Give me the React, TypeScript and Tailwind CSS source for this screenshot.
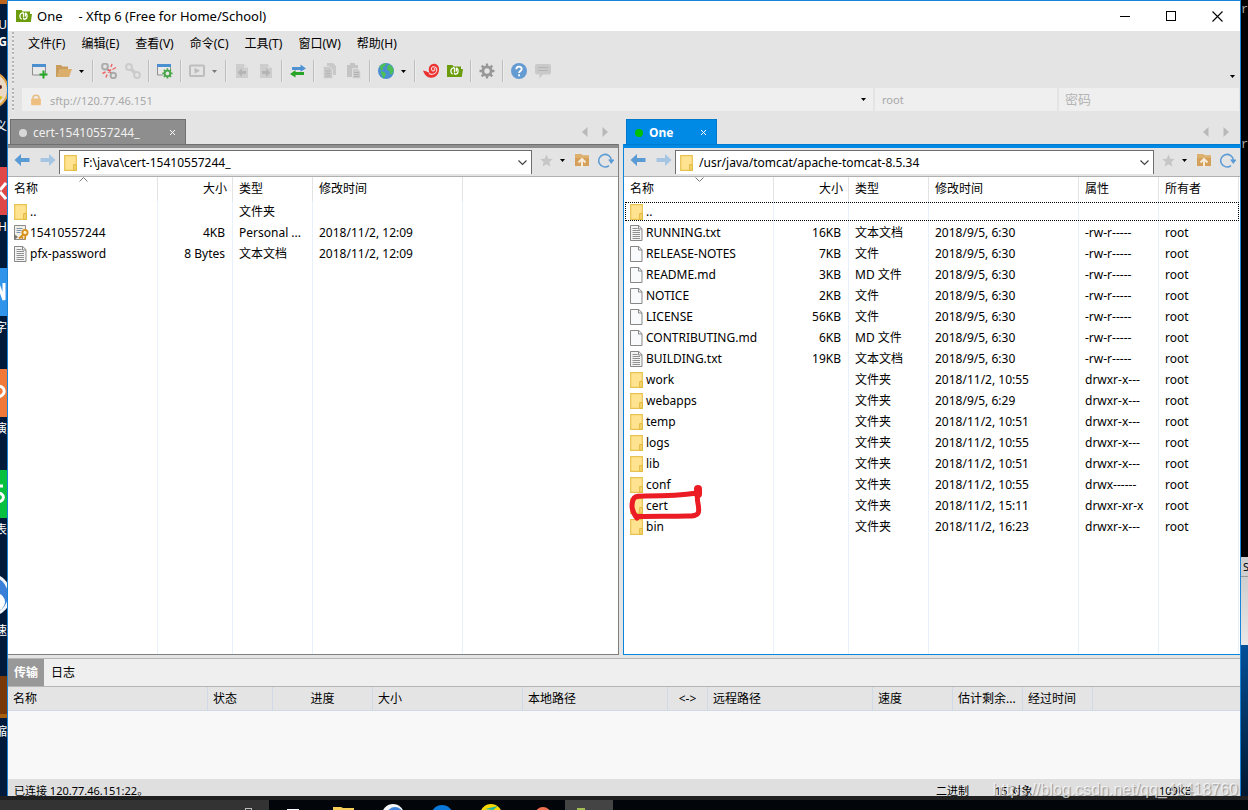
import type { ReactNode } from 'react';
import { clsx } from 'clsx';

/* ---------- icons ---------- */

function Icon({ children, size = 16 }: { children: ReactNode; size?: number }) {
  return (
    <svg width={size} height={size} viewBox="0 0 16 16" fill="none" aria-hidden="true" className="shrink-0">
      {children}
    </svg>
  );
}

const XftpLogo = () => (
  <Icon>
    <path d="M0 2h5.5l1 1.500H14v2.500h2l-1.200 8H0z" fill="#6a9c0c" />
    <path d="M5.600 11.200C3 9.500 3.300 5.500 6.200 4.800c1-.2 1.300.4 1.300 1.200v3.500" stroke="#fff" strokeWidth="1.300" />
    <path d="M9.400 4.800c2.600 1.700 2.300 5.700-.6 6.400-1 .2-1.300-.4-1.300-1.200M9.400 4.800v3.700" stroke="#fff" strokeWidth="1.300" />
  </Icon>
);

const NewSession = () => (
  <Icon>
    <path d="M.5 1.500h13v10.500H.5z" fill="#e9e9e9" stroke="#8d8d8d" />
    <path d="M0 1h14v3H0z" fill="#4a90d0" />
    <path d="M11.500 7.500v8M7.500 11.500h8" stroke="#22a822" strokeWidth="2" />
  </Icon>
);

const OpenFolder = () => (
  <Icon>
    <path d="M0 2h5l1.500 1.500H12V6H4L1.500 14H0z" fill="#c99d5c" />
    <path d="M4 6h12l-3 8H1.500z" fill="#dcae6c" />
  </Icon>
);

const Disconnect = () => (
  <Icon>
    <circle cx="4" cy="3.500" r="2.900" stroke="#ababab" strokeWidth="2" />
    <circle cx="12.300" cy="12.500" r="2.700" stroke="#ababab" strokeWidth="2" />
    <path d="M5.500 5.500l2 2M9 9l2 2" stroke="#ababab" strokeWidth="2.400" />
    <path d="M10 4l1-3M11.500 6.500l3.500-2M1.500 10.500l3-1.500M5 14.500l1-3" stroke="#ee6464" strokeWidth="1.400" />
    <path d="M7 6.500l3 3M10 6.500l-3 3" stroke="#ee5050" strokeWidth="1.300" />
  </Icon>
);

const Reconnect = () => (
  <Icon>
    <circle cx="4" cy="4" r="2.900" stroke="#cbcbcb" strokeWidth="2" />
    <circle cx="12" cy="12" r="2.900" stroke="#cbcbcb" strokeWidth="2" />
    <path d="M5.500 5.500l5 5" stroke="#cbcbcb" strokeWidth="3.400" />
  </Icon>
);

const GearShape = ({ color }: { color: string }) => (
  <>
    <circle cx="8" cy="8" r="4.100" stroke={color} strokeWidth="2.800" />
    <path
      d="M8 .5v3M8 12.500v3M.5 8h3M12.500 8h3M2.700 2.700l2 2M11.300 11.300l2 2M13.300 2.700l-2 2M4.700 11.300l-2 2"
      stroke={color}
      strokeWidth="2.400"
    />
  </>
);

const SessionProps = () => (
  <Icon>
    <path d="M.5 1.500h13v10.500H.5z" fill="#e9e9e9" stroke="#8d8d8d" />
    <path d="M0 1h14v3H0z" fill="#4a90d0" />
    <g transform="translate(5 5) scale(.68)">
      <circle cx="8" cy="8" r="7" fill="#e6e6e6" />
      <GearShape color="#4aa64a" />
    </g>
  </Icon>
);

const PlayBox = () => (
  <Icon>
    <rect x="1" y="2.500" width="14" height="10.500" rx="1" stroke="#bdbdbd" strokeWidth="2" />
    <path d="M5.500 4.800l5.500 3-5.500 3z" fill="#bdbdbd" />
  </Icon>
);

const DocArrow = ({ flip }: { flip?: boolean }) => (
  <Icon>
    <path d="M2 1h8l4 4v10H2z" fill="#cdcdcd" />
    <path d="M10 1l4 4h-4z" fill="#dedede" />
    <path d={flip ? 'M4 8h4V5l4.500 4.500L8 14v-3H4z' : 'M12 8H8V5L3.500 9.500 8 14v-3h4z'} fill="#b5b5b5" />
  </Icon>
);

const Transfer = () => (
  <Icon>
    <path d="M2 4h8.500V1.500L16 5.500l-5.500 3.200V7H2z" fill="#4f92d4" />
    <path d="M14 9H5.500V7L0 11l5.500 3.500V12H14z" fill="#28a428" />
  </Icon>
);

const CopyDocs = () => (
  <Icon>
    <path d="M5 0h6l3 3v9H5z" fill="#c9c9c9" />
    <path d="M1.500 3.500h6l3 3v9h-9z" fill="#c9c9c9" stroke="#dedede" />
    <path d="M3.500 8h5M3.500 10.500h5M3.500 13h5" stroke="#b3b3b3" />
  </Icon>
);

const PasteDocs = () => (
  <Icon>
    <path d="M1 2h3V0h5v2h3v12H1z" fill="#c4c4c4" />
    <path d="M6.500 5.500h5l3 3v7h-8z" fill="#cbcbcb" stroke="#dedede" />
    <path d="M8 9.500h5M8 11.500h5M8 13.500h5" stroke="#b3b3b3" />
  </Icon>
);

const GlobeIcon = () => (
  <Icon>
    <circle cx="8" cy="8" r="8" fill="#4a8fd0" />
    <path d="M1.500 3.500C4 1 6 .2 8.500.3L7 3 4.500 4.500 5 7 3 7.500zM3 8l4 1.500 1 2-2.500 4C4 14 4.500 12 3 10zM9.500 3l2-1.500C14 3 15.500 5 15.700 8l-2 3.500L12 11l-.5-3L9 6.500z" fill="#4cbf55" />
  </Icon>
);

const XshellSwirl = () => (
  <Icon>
    <path d="M0 7.500c3 .5 4.500 1.500 6.500 2.500C4.500 5 7 1 11 .8c3.500 0 5.200 3 5 6C15.700 12 12 15 8 14.800 4 14.600 1.500 12 0 7.500z" fill="#ed3030" />
    <path d="M6 10.500c3 1.800 7 .5 7.800-3C14.300 4 10 2.300 8.500 5c-.8 2 1.500 3.800 3 2.200.6-.8.200-1.700-.8-1.500" stroke="#f8d4d4" strokeWidth="1.100" />
  </Icon>
);

const OptionsGear = () => (
  <Icon>
    <GearShape color="#979797" />
  </Icon>
);

const HelpIcon = () => (
  <Icon>
    <circle cx="8" cy="8" r="8" fill="#659bd3" />
    <path d="M5.300 6.200C5.300 2.800 10.700 2.800 10.700 6c0 2-2.600 2-2.600 4M8.100 11.300v1.900" stroke="#fff" strokeWidth="1.800" />
  </Icon>
);

const ChatIcon = () => (
  <Icon>
    <path d="M2 1h12q2 0 2 2v6.500q0 2-2 2H8L4.500 15.500v-4H2q-2 0-2-2V3q0-2 2-2z" fill="#c9c9c9" />
    <path d="M3 4.500h10M3 7.500h10" stroke="#b4b4b4" />
  </Icon>
);

const LockIcon = () => (
  <Icon size={12}>
    <path d="M4 7V4.500C4 .5 12 .5 12 4.500V7" stroke="#e6bd84" strokeWidth="2" />
    <rect x="1.500" y="6" width="13" height="9" rx="1" fill="#edbf80" />
  </Icon>
);

const NavArrow = ({ forward }: { forward?: boolean }) => (
  <Icon>
    <path
      d={forward ? 'M.5 6H9V2l6.500 6L9 14v-4H.5z' : 'M15.500 6H7V2L.5 8 7 14v-4h8.500z'}
      fill={forward ? '#a5c5e3' : '#5b9bd5'}
    />
  </Icon>
);

const StarIcon = () => (
  <Icon size={13}>
    <path d="M8 .5l2.200 5.200 5.600.5-4.300 3.700 1.300 5.600L8 12.500l-4.800 3 1.300-5.600L.2 6.200l5.600-.5z" fill="#c6c6c6" />
  </Icon>
);

const FolderUp = () => (
  <Icon>
    <path d="M1 2h6l1.500 1.500H15V14H1z" fill="#d5a05a" />
    <path d="M1 2h6l1.500 1.500H15V6H1z" fill="#ddb06e" />
    <path d="M8 15.500V8M4.500 10.500L8 7l3.500 3.500" stroke="#f7ead9" strokeWidth="2" />
  </Icon>
);

const RefreshIcon = () => (
  <Icon>
    <path d="M11 13.600A6.300 6.300 0 1 1 13.300 8" stroke="#5b9bd5" strokeWidth="1.500" />
    <path d="M10 7.500h6.500L13.300 12z" fill="#5b9bd5" />
  </Icon>
);

const FolderIcon = () => (
  <Icon>
    <path d="M.7.700h11.600v14.600H.7z" fill="#ffe391" stroke="#e8c250" strokeWidth="1.200" />
    <path d="M9.700 15.300V9.600h2.600v5.700z" fill="#f6d873" stroke="#e0b73c" />
  </Icon>
);

const FileIcon = ({ lines }: { lines?: boolean }) => (
  <Icon>
    <path d="M.5.500h8.300l3.200 3.200v11.800H.5z" fill={lines ? '#f4f4f4' : '#f8fafc'} stroke="#878787" />
    <path d="M8.500.500v3.500H12" stroke="#878787" />
    {lines && <path d="M2.500 3.500h5M2.500 5.500h7.500M2.500 7.500h7.500M2.500 9.500h7.500M2.500 11.500h7.500M2.500 13.500h7.500" stroke="#909090" />}
  </Icon>
);

const CertIcon = () => (
  <Icon>
    <path d="M.5.500h11v14H.5z" fill="#f2efe4" stroke="#8b8b8b" />
    <path d="M2.500 3.500h6M2.500 5.500h5M2.500 7.500h4" stroke="#7f94b4" />
    <path d="M0 9l4 3-4 3z" fill="#777" />
    <circle cx="11" cy="7.500" r="2.600" fill="#fff3c8" stroke="#d58f1c" strokeWidth="1.800" />
    <path d="M9.500 9.500L5 13.500M7 11.500l2 2M11.500 10l-.5 4.500" stroke="#d58f1c" strokeWidth="1.800" />
  </Icon>
);

const Caret = ({ color = '#000' }: { color?: string }) => (
  <svg width="5" height="3" viewBox="0 0 5 3" aria-hidden="true">
    <path d="M0 0h5L2.500 3z" fill={color} />
  </svg>
);

const Chevron = () => (
  <svg width="9" height="6" viewBox="0 0 9 6" fill="none" aria-hidden="true">
    <path d="M.5.500l4 4 4-4" stroke="#444" strokeWidth="1.200" />
  </svg>
);

/* ---------- data ---------- */

const menus = ['文件(F)', '编辑(E)', '查看(V)', '命令(C)', '工具(T)', '窗口(W)', '帮助(H)'];

type Kind = 'folder' | 'text' | 'file' | 'cert';

interface Entry {
  name: string;
  kind: Kind;
  cells: string[];
}

const localColumns = ['名称', '大小', '类型', '修改时间'];
const localFiles: Entry[] = [
  { name: '..', kind: 'folder', cells: ['', '文件夹', ''] },
  { name: '15410557244', kind: 'cert', cells: ['4KB', 'Personal ...', '2018/11/2, 12:09'] },
  { name: 'pfx-password', kind: 'text', cells: ['8 Bytes', '文本文档', '2018/11/2, 12:09'] },
];

const remoteColumns = ['名称', '大小', '类型', '修改时间', '属性', '所有者'];
const remoteFiles: Entry[] = [
  { name: '..', kind: 'folder', cells: ['', '', '', '', ''] },
  { name: 'RUNNING.txt', kind: 'text', cells: ['16KB', '文本文档', '2018/9/5, 6:30', '-rw-r-----', 'root'] },
  { name: 'RELEASE-NOTES', kind: 'file', cells: ['7KB', '文件', '2018/9/5, 6:30', '-rw-r-----', 'root'] },
  { name: 'README.md', kind: 'file', cells: ['3KB', 'MD 文件', '2018/9/5, 6:30', '-rw-r-----', 'root'] },
  { name: 'NOTICE', kind: 'file', cells: ['2KB', '文件', '2018/9/5, 6:30', '-rw-r-----', 'root'] },
  { name: 'LICENSE', kind: 'file', cells: ['56KB', '文件', '2018/9/5, 6:30', '-rw-r-----', 'root'] },
  { name: 'CONTRIBUTING.md', kind: 'file', cells: ['6KB', 'MD 文件', '2018/9/5, 6:30', '-rw-r-----', 'root'] },
  { name: 'BUILDING.txt', kind: 'text', cells: ['19KB', '文本文档', '2018/9/5, 6:30', '-rw-r-----', 'root'] },
  { name: 'work', kind: 'folder', cells: ['', '文件夹', '2018/11/2, 10:55', 'drwxr-x---', 'root'] },
  { name: 'webapps', kind: 'folder', cells: ['', '文件夹', '2018/9/5, 6:29', 'drwxr-x---', 'root'] },
  { name: 'temp', kind: 'folder', cells: ['', '文件夹', '2018/11/2, 10:51', 'drwxr-x---', 'root'] },
  { name: 'logs', kind: 'folder', cells: ['', '文件夹', '2018/11/2, 10:55', 'drwxr-x---', 'root'] },
  { name: 'lib', kind: 'folder', cells: ['', '文件夹', '2018/11/2, 10:51', 'drwxr-x---', 'root'] },
  { name: 'conf', kind: 'folder', cells: ['', '文件夹', '2018/11/2, 10:55', 'drwx------', 'root'] },
  { name: 'cert', kind: 'folder', cells: ['', '文件夹', '2018/11/2, 15:11', 'drwxr-xr-x', 'root'] },
  { name: 'bin', kind: 'folder', cells: ['', '文件夹', '2018/11/2, 16:23', 'drwxr-x---', 'root'] },
];

const columnWidths = ['w-[150px]', 'w-[75px]', 'w-[80px]', 'w-[150px]', 'w-[80px]', 'w-[80px]'];

const transferColumns = [
  { label: '名称', width: 'w-[200px] pl-[5px]' },
  { label: '状态', width: 'w-[65px] pl-[5px]' },
  { label: '进度', width: 'w-[100px] text-center' },
  { label: '大小', width: 'w-[150px] pl-[5px]' },
  { label: '本地路径', width: 'w-[145px] pl-[5px]' },
  { label: '<->', width: 'w-[40px] text-center' },
  { label: '远程路径', width: 'w-[165px] pl-[5px]' },
  { label: '速度', width: 'w-[80px] pl-[5px]' },
  { label: '估计剩余...', width: 'w-[70px] pl-[5px]' },
  { label: '经过时间', width: 'w-[70px] pl-[5px]' },
];

/* ---------- window chrome ---------- */

function TitleBar() {
  return (
    <header className="flex h-[30px] shrink-0 items-center bg-white pl-2">
      <XftpLogo />
      <h1 className="ml-[5px] flex gap-4 text-[13px]">
        <span>One</span>
        <span>- Xftp 6 (Free for Home/School)</span>
      </h1>
      <div className="ml-auto flex h-full">
        <button aria-label="最小化" className="flex w-[46px] items-center justify-center">
          <span className="h-px w-2.5 bg-black" />
        </button>
        <button aria-label="最大化" className="flex w-[46px] items-center justify-center">
          <span className="size-2.5 border border-black" />
        </button>
        <button aria-label="关闭" className="flex w-[46px] items-center justify-center">
          <svg width="11" height="11" viewBox="0 0 11 11" aria-hidden="true">
            <path d="M.5.500l10 10M10.500.500l-10 10" stroke="#000" strokeWidth="1.100" />
          </svg>
        </button>
      </div>
    </header>
  );
}

function Grip() {
  return <span className="ml-1 w-0.5 shrink-0 self-stretch bg-[repeating-linear-gradient(#b4b4b4_0_2px,#f4f4f4_2px_3px,#e4e4e4_3px_4px)]" />;
}

function MenuBar() {
  return (
    <nav className="flex h-[25px] shrink-0 items-center pt-px">
      <Grip />
      <div className="ml-[14px] flex gap-4">
        {menus.map((menu) => (
          <button key={menu}>{menu}</button>
        ))}
      </div>
    </nav>
  );
}

function ToolButton({ label, children }: { label: string; children: ReactNode }) {
  return (
    <button aria-label={label} className="flex h-6 w-6 items-center justify-center">
      {children}
    </button>
  );
}

function DropButton({ label, color }: { label: string; color?: string }) {
  return (
    <button aria-label={label} className="flex h-6 w-[13px] items-center justify-center pr-0.5">
      <Caret color={color} />
    </button>
  );
}

const Separator = () => (
  <span className="mx-[3px] h-[22px] w-0.5 border-l border-[#bdbdbd] bg-[#ededed]" />
);

function Toolbar() {
  return (
    <div className="flex h-[29px] shrink-0 items-center pt-px">
      <Grip />
      <div className="ml-[14px] flex items-center">
        <ToolButton label="新建会话"><NewSession /></ToolButton>
        <ToolButton label="打开"><OpenFolder /></ToolButton>
        <DropButton label="打开选项" />
        <Separator />
        <ToolButton label="断开"><Disconnect /></ToolButton>
        <ToolButton label="重新连接"><Reconnect /></ToolButton>
        <Separator />
        <ToolButton label="会话属性"><SessionProps /></ToolButton>
        <Separator />
        <ToolButton label="执行"><PlayBox /></ToolButton>
        <DropButton label="执行选项" color="#777" />
        <Separator />
        <ToolButton label="传输到左边"><DocArrow /></ToolButton>
        <ToolButton label="传输到右边"><DocArrow flip /></ToolButton>
        <Separator />
        <ToolButton label="同步"><Transfer /></ToolButton>
        <Separator />
        <ToolButton label="复制"><CopyDocs /></ToolButton>
        <ToolButton label="粘贴"><PasteDocs /></ToolButton>
        <Separator />
        <ToolButton label="编码"><GlobeIcon /></ToolButton>
        <DropButton label="编码选项" />
        <Separator />
        <ToolButton label="Xshell"><XshellSwirl /></ToolButton>
        <ToolButton label="Xftp"><XftpLogo /></ToolButton>
        <Separator />
        <ToolButton label="选项"><OptionsGear /></ToolButton>
        <Separator />
        <ToolButton label="帮助"><HelpIcon /></ToolButton>
        <ToolButton label="反馈"><ChatIcon /></ToolButton>
      </div>
      <button aria-label="更多按钮" className="mt-2.5 mr-[5px] ml-auto flex h-4 items-center">
        <Caret />
      </button>
    </div>
  );
}

function AddressBar() {
  return (
    <div className="flex h-[27px] shrink-0 items-center pt-[3px] pb-px">
      <Grip />
      <div className="ml-2 flex h-[23px] min-w-0 flex-1 gap-0.5 pr-px text-[#a8a8a8]">
        <div className="flex flex-1 items-center bg-[#efefef] pr-[7px] pl-2">
          <LockIcon />
          <input aria-label="地址" defaultValue="sftp://120.77.46.151" className="ml-2 min-w-0 flex-1 bg-transparent pt-0.5 text-[11px] outline-none" />
          <button aria-label="地址历史"><Caret /></button>
        </div>
        <input aria-label="用户名" defaultValue="root" className="w-[182px] bg-[#efefef] px-[7px] text-[11px] outline-none" />
        <input aria-label="密码" placeholder="密码" className="w-[180px] bg-[#efefef] px-1.5 pb-0.5 text-[13px] outline-none placeholder:text-[#b4b4b4]" />
      </div>
    </div>
  );
}

/* ---------- panes ---------- */

function EntryIcon({ kind }: { kind: Kind }) {
  if (kind === 'folder') return <FolderIcon />;
  if (kind === 'cert') return <CertIcon />;
  return <FileIcon lines={kind === 'text'} />;
}

function RedMark() {
  return (
    <svg width="78" height="40" viewBox="0 0 78 40" fill="none" aria-hidden="true" className="absolute -top-3 left-1 z-10">
      <path
        d="M9 35C3 28 3 20 6 15c2-2 5-2 12-2 18 0 32 0 51-3l1-4-.5 6c-1 7 2 10 1 17-1 4-6 4-11 4-16 .5-32 0-50 .5"
        stroke="#ec1c24"
        strokeWidth="5"
        strokeLinecap="round"
        strokeLinejoin="round"
      />
      <path d="M70 6v5" stroke="#ec1c24" strokeWidth="8" strokeLinecap="round" />
    </svg>
  );
}

interface FileTableProps {
  columns: string[];
  files: Entry[];
  sort: 'up' | 'down';
  focused?: string;
  marked?: string;
}

function FileTable({ columns, files, sort, focused, marked }: FileTableProps) {
  return (
    <table className="h-full w-full table-fixed border-separate border-spacing-0 text-left">
      <thead>
        <tr className="h-6">
          {columns.map((column, i) => (
            <th
              key={column}
              className={clsx('relative h-6 border-r border-[#e3e3e3] p-0 pl-1.5 font-normal', columnWidths[i], i === 1 && 'pr-[5px] text-right')}
            >
              {column}
              {i === 0 && (
                <svg width="9" height="5" viewBox="0 0 9 5" fill="none" aria-hidden="true" className="absolute top-0 left-[71px]">
                  <path d={sort === 'up' ? 'M.5 4.500l4-4 4 4' : 'M.5.500l4 4 4-4'} stroke="#7a7a7a" />
                </svg>
              )}
            </th>
          ))}
          <th className="p-0" />
        </tr>
      </thead>
      <tbody>
        {files.map((file) => (
          <tr
            key={file.name}
            className={clsx('h-[21px]', file.name === focused && 'outline-1 -outline-offset-2 outline-black outline-dotted')}
          >
            <td className="relative h-[21px] border-r border-[#e8f0fb] p-0 pl-1.5">
              <span className="flex h-4 items-center">
                <EntryIcon kind={file.kind} />
                {file.name}
              </span>
              {file.name === marked && <RedMark />}
            </td>
            {file.cells.map((cell, i) => (
              <td
                key={i}
                className={clsx('h-[21px] truncate border-r border-[#e8f0fb] p-0', i === 0 ? 'pr-[7px] text-right' : 'pl-1.5')}
              >
                {cell}
              </td>
            ))}
            <td className="p-0" />
          </tr>
        ))}
        <tr>
          {columns.map((column) => (
            <td key={column} className="border-r border-[#e8f0fb] p-0" />
          ))}
          <td className="p-0" />
        </tr>
      </tbody>
    </table>
  );
}

interface PaneProps {
  title: string;
  path: string;
  active?: boolean;
  children: ReactNode;
}

function Pane({ title, path, active, children }: PaneProps) {
  return (
    <section className="flex min-w-0 flex-col">
      <div className="flex h-[25px] shrink-0">
        <div
          className={clsx(
            'flex h-[25px] items-center border border-b-0 pt-px pr-2 text-white',
            active ? 'ml-[3px] w-[91px] border-[#0078cc] bg-[#008ae6]' : 'ml-0.5 w-[176px] border-[#707070] bg-[#8e8e8e]',
          )}
        >
          <span className={clsx('ml-2 size-2 shrink-0 rounded-full', active ? 'bg-[#00c000]' : 'bg-[#d8d8d8]')} />
          <button className={clsx('ml-1.5', active ? 'font-bold' : 'text-[#f0f0f0]')}>{title}</button>
          <button aria-label="关闭标签" className="mr-px ml-auto">
            <svg width="7" height="7" viewBox="0 0 7 7" aria-hidden="true">
              <path d="M1 1l5 5M6 1L1 6" stroke="#fff" />
            </svg>
          </button>
        </div>
        <div className="mr-[11px] ml-auto flex items-center gap-[14px]">
          <button aria-label="上一个标签">
            <svg width="6" height="10" viewBox="0 0 6 10" aria-hidden="true">
              <path d="M5.500 0v10L0 5z" fill="#b9b9b9" />
            </svg>
          </button>
          <button aria-label="下一个标签">
            <svg width="6" height="10" viewBox="0 0 6 10" aria-hidden="true">
              <path d="M.5 0v10L6 5z" fill="#b9b9b9" />
            </svg>
          </button>
        </div>
      </div>
      <div
        className={clsx(
          'flex min-h-0 flex-1 flex-col border-b',
          active ? 'border-l border-[#0a86dc]' : 'border-r border-[#808080]',
        )}
      >
        <div className={clsx('h-1 shrink-0 border-t', active ? 'border-[#0078cc] bg-[#008ae6]' : 'border-[#707070] bg-[#8e8e8e]')} />
        <div className="flex h-[29px] shrink-0 items-center border-b border-[#b0b0b0] pl-1.5">
          <button aria-label="后退" className="-mt-1"><NavArrow /></button>
          <button aria-label="前进" className="-mt-1 ml-2.5"><NavArrow forward /></button>
          <div className="ml-[3px] flex h-6 min-w-0 flex-1 items-center border border-b-0 border-[#6e6e6e] bg-white pl-1">
            <FolderIcon />
            <input aria-label="路径" defaultValue={path} className="ml-[3px] min-w-0 flex-1 bg-transparent outline-none" />
            <button aria-label="路径历史" className="mr-1"><Chevron /></button>
          </div>
          <div className="-mt-1 flex w-[86px] shrink-0 items-center pl-2">
            <button aria-label="书签"><StarIcon /></button>
            <button aria-label="书签选项" className="ml-[7px]"><Caret /></button>
            <button aria-label="上级目录" className="ml-[9px]"><FolderUp /></button>
            <button aria-label="刷新" className="ml-2"><RefreshIcon /></button>
          </div>
        </div>
        <div className="min-h-0 flex-1 bg-white">{children}</div>
      </div>
    </section>
  );
}

function TransferPanel() {
  return (
    <section className="mt-[3px] shrink-0 border-t border-[#b5b5b5]">
      <div className="flex h-[27px] bg-[#efefef]">
        <button className="w-9 bg-[#989898] font-bold text-white">传输</button>
        <button className="px-[7px]">日志</button>
      </div>
      <div className="h-[93px] border-t border-[#b5b5b5] bg-[#f8f8f8]">
        <table className="w-full table-fixed border-separate border-spacing-0 bg-[#e4e4e4] text-left">
          <thead>
            <tr>
              {transferColumns.map(({ label, width }) => (
                <th key={label} className={clsx('h-6 border-r border-b border-[#d0d9e8] py-0 pr-0 font-normal whitespace-nowrap', width)}>
                  {label}
                </th>
              ))}
              <th className="border-b border-[#d0d9e8] p-0" />
            </tr>
          </thead>
        </table>
      </div>
    </section>
  );
}

function StatusBar() {
  return (
    <footer className="flex h-[17px] shrink-0 overflow-hidden bg-[#dfdfdf] pt-1 pl-1.5 text-[11px] leading-4">
      <span className="flex-1">已连接 120.77.46.151:22。</span>
      <span className="w-[59px]">二进制</span>
      <span className="w-[164px]">15 对象</span>
      <span className="w-[81px]">109KB</span>
    </footer>
  );
}

/* ---------- desktop behind the window ---------- */

const shortcuts = [
  { place: 'top-0 h-1', look: 'bg-[#c0661c]', glyph: '' },
  { place: 'top-[167px] h-12', look: 'bg-[#e04848]', glyph: 'x' },
  { place: 'top-[268px] h-12', look: 'bg-[#3094ea]', glyph: 'n' },
  { place: 'top-[369px] h-12', look: 'bg-[#f07838]', glyph: 'p' },
  { place: 'top-[470px] h-12', look: 'bg-[#08c040]', glyph: 's' },
  { place: 'top-[676px] h-[42px]', look: 'border-b-4 border-[#a86010] bg-[#783808]', glyph: '' },
];

const strokes: Record<string, string> = {
  x: 'M6 16l-6 7M0 25l6 7',
  n: 'M-2 16l6 16V15',
  p: 'M-4 17c11-1 11 11 0 11',
  s: 'M3 16h-6M-3 23c9 0 8 9 0 9',
};

const captions = [
  { place: 'top-[17px]', text: 'RU' },
  { place: 'top-[34px] font-bold', text: 'G' },
  { place: 'top-[119px]', text: '义' },
  { place: 'top-[219px]', text: 'H' },
  { place: 'top-[320px]', text: '字' },
  { place: 'top-[421px]', text: '演' },
  { place: 'top-[522px]', text: '表' },
  { place: 'top-[623px]', text: '速' },
  { place: 'top-[724px]', text: '缩' },
];

function DesktopStrip() {
  return (
    <aside className="relative w-[7px] shrink-0 overflow-hidden bg-[#001a3c] text-[12px] leading-4 text-white">
      {shortcuts.map(({ place, look, glyph }) => (
        <div key={place} className={clsx('absolute left-0 w-full overflow-hidden', place, look)}>
          {glyph && (
            <svg width="7" height="48" viewBox="0 0 7 48" fill="none" aria-hidden="true">
              <path d={strokes[glyph]} stroke="#fff" strokeWidth="3" />
            </svg>
          )}
        </div>
      ))}
      <svg width="7" height="40" viewBox="0 0 7 40" aria-hidden="true" className="absolute top-[70px] left-0">
        <circle cx="-10" cy="20" r="19" fill="#e0a040" />
        <circle cx="-10" cy="20" r="17" fill="#ead9c4" />
        <circle cx="0" cy="17" r="2" fill="#5a2020" />
        <path d="M0 26l3 1-3 3z" fill="#d8c010" />
      </svg>
      <svg width="7" height="44" viewBox="0 0 7 44" aria-hidden="true" className="absolute top-[573px] left-0">
        <circle cx="-11" cy="22" r="22" fill="#f0f4f8" />
        <circle cx="-11" cy="22" r="19" fill="#3a80d8" />
        <circle cx="-4" cy="29" r="9" fill="#fff" />
      </svg>
      {captions.map(({ place, text }) => (
        <span key={place} className={clsx('absolute right-0 whitespace-nowrap', place)}>
          {text}
        </span>
      ))}
    </aside>
  );
}

function BackWindows() {
  return (
    <aside className="flex w-[7px] shrink-0 flex-col overflow-hidden bg-black text-[12px] leading-4">
      <div className="h-[135px] shrink-0 pt-0.5 font-['Liberation_Mono',monospace] text-[#a8a8a8]">re</div>
      <div className="h-[422px] shrink-0 pt-0.5 font-['Liberation_Mono',monospace] text-[#a8a8a8]">r:</div>
      <div className="h-5 shrink-0 border-b border-[#999] bg-[#cfcfcf] pt-0.5 pl-0.5 text-[11px] text-black">S</div>
      <div className="h-[68px] shrink-0 bg-linear-to-b from-[#cfcfcf] to-[#e8e8e8]" />
      <div className="flex-1 bg-linear-to-b from-[#00509a] to-[#001830]" />
    </aside>
  );
}

function Taskbar() {
  return (
    <div className="flex h-[14px] shrink-0 items-end overflow-hidden border-t-4 border-[#202020] bg-[#02050a]">
      <div className="-mt-1 flex h-[14px] w-[269px] shrink-0 items-end justify-end bg-[#333] pr-[17px]">
        <span className="h-0.5 w-[7px] border border-b-0 border-[#bbb]" />
      </div>
      <svg width="296" height="8" viewBox="0 0 296 8" aria-hidden="true" className="shrink-0">
        <path d="M18 7h12v1H18z" fill="#fff" />
        <path d="M64 5h8l2 1h11v2H64z" fill="#f5cf58" />
        <circle cx="124" cy="13" r="11" fill="#f4f6f8" />
        <circle cx="126" cy="13" r="8" fill="#3f84dc" />
        <circle cx="173" cy="14" r="11" fill="#0a78d8" />
        <circle cx="222" cy="13" r="11" fill="#f8d800" />
        <path d="M216 7l13-3-5 4z" fill="#20b8a0" />
        <circle cx="274" cy="13" r="8" fill="#f07050" />
      </svg>
      <div className="-mt-1 flex h-[14px] w-12 shrink-0 items-end bg-[#444] pl-3">
        <span className="h-0.5 w-2 bg-[#a4bc54]" />
      </div>
    </div>
  );
}

export default function App() {
  return (
    <div className="relative flex h-screen flex-col overflow-hidden bg-[#02050a] font-['Noto_Sans','Noto_Sans_CJK_SC',sans-serif] text-[12px] leading-4 text-black">
      <div className="flex min-h-0 flex-1">
        <DesktopStrip />
        <main className="flex min-w-0 flex-1 flex-col border border-b-0 border-[#1883d7] bg-[#e4e4e4]">
          <TitleBar />
          <MenuBar />
          <Toolbar />
          <AddressBar />
          <div className="mt-[7px] grid min-h-0 flex-1 grid-cols-[611fr_617fr] gap-1">
            <Pane title="cert-15410557244_" path="F:\java\cert-15410557244_">
              <FileTable columns={localColumns} files={localFiles} sort="up" />
            </Pane>
            <Pane title="One" path="/usr/java/tomcat/apache-tomcat-8.5.34" active>
              <FileTable columns={remoteColumns} files={remoteFiles} sort="down" focused=".." marked="cert" />
            </Pane>
          </div>
          <TransferPanel />
          <StatusBar />
        </main>
        <BackWindows />
      </div>
      <Taskbar />
      <span className="absolute right-2.5 bottom-2.5 font-['Liberation_Sans',sans-serif] text-[16px] leading-5 text-white/70 [text-shadow:1px_1px_1px_rgb(0_0_0/35%)]">
        https://blog.csdn.net/qq_41418760
      </span>
    </div>
  );
}
